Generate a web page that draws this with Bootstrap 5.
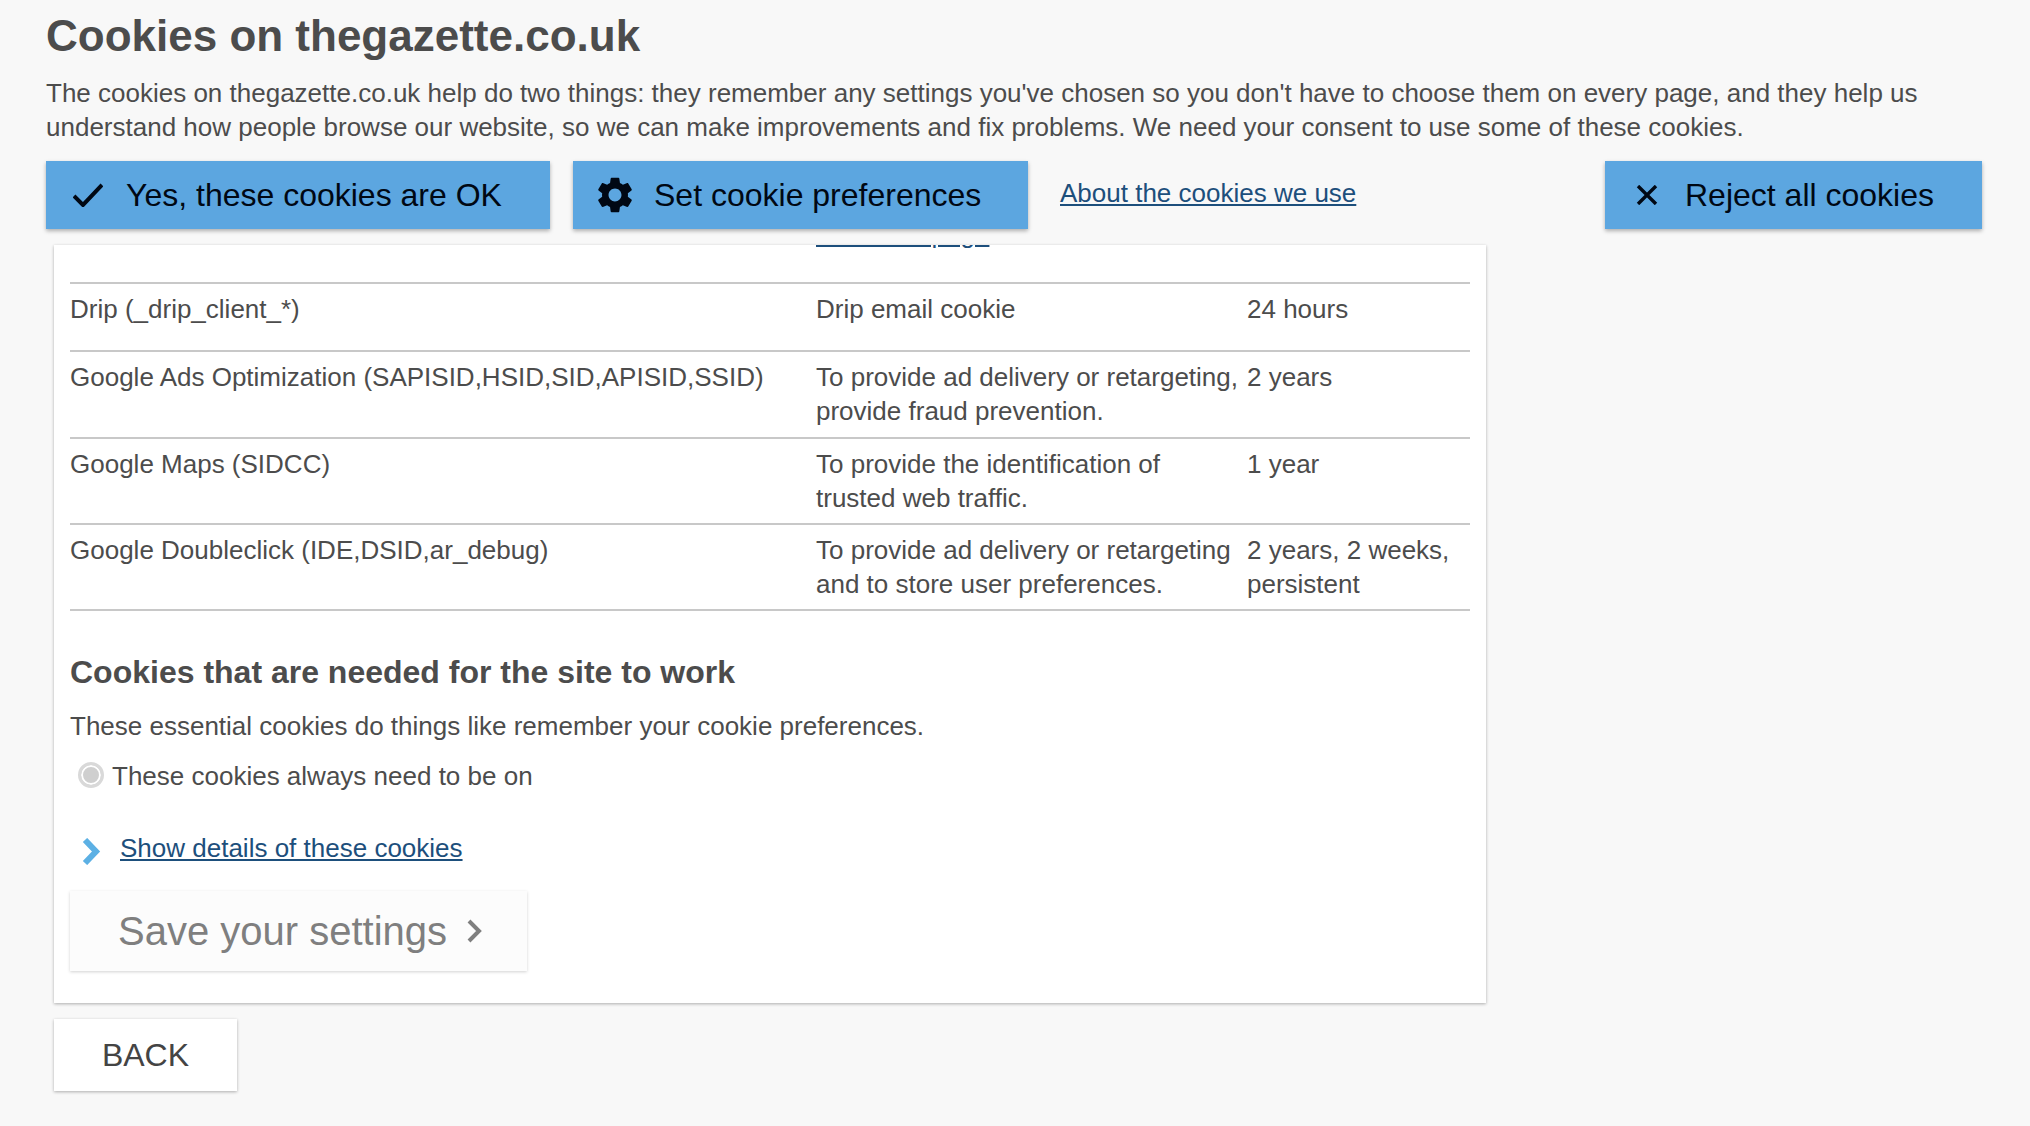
<!DOCTYPE html>
<html lang="en">
<head>
  <meta charset="UTF-8">
  <meta name="viewport" content="width=device-width, initial-scale=1.0">
  <title>Cookies on thegazette.co.uk</title>
  <link href="https://cdn.jsdelivr.net/npm/bootstrap@5.3.0/dist/css/bootstrap.min.css" rel="stylesheet">
  <script src="https://cdn.jsdelivr.net/npm/bootstrap@5.3.0/dist/js/bootstrap.bundle.min.js"></script>
  <style>
    html, body { height: 100%; }
    body {
      background: #f8f8f8;
      color: #4c4c4c;
      font-family: "Liberation Sans", Arial, sans-serif;
      font-size: 26px;
      line-height: 34px;
      overflow: hidden;
    }
    a { color: #1d4f7c; }
    .cookie-head { padding: 12px 47px 0 46px; }
    .cookie-title { font-size: 44px; line-height: 48px; font-weight: 700; margin: 0 0 16px; }
    .cookie-intro { margin: 0 0 17px; }
    .consent-btn {
      background: #5ca6e0;
      color: #000814;
      border: 0;
      border-radius: 0;
      height: 68px;
      font-size: 32px;
      line-height: 68px;
      padding: 0;
      box-shadow: 0 2px 4px rgba(0, 0, 0, .3);
    }
    .btn-yes { width: 504px; margin-right: 23px; }
    .btn-prefs { width: 455px; margin-right: 32px; }
    .btn-reject { width: 377px; margin-right: 1px; }
    .btn-yes svg { margin: 0 23px 0 27px; }
    .btn-prefs svg { margin: 0 21px 0 24px; }
    .btn-reject svg { margin: 0 27px 0 31px; }
    .about-link { margin-top: -4px; }
    .cookie-panel {
      width: 1432px;
      margin: 16px 0 0 54px;
      height: 758px;
      background: #fff;
      padding: 0 16px;
      box-shadow: 0 1px 3px rgba(0, 0, 0, .3);
    }
    .clip-row { height: 39px; border-bottom: 2px solid #c8c8c8; overflow: hidden; padding-left: 746px; }
    .clip-row a { display: block; width: max-content; margin-top: -28px; }
    .cookie-table { margin: 0; width: 1400px; table-layout: fixed; color: inherit; --bs-table-bg: transparent; --bs-table-color: #4c4c4c; }
    .cookie-table td { padding: 8px 4px 8px 0; border-bottom: 2px solid #c8c8c8; vertical-align: top; line-height: 34px; }
    .cookie-table .one-line td { padding-bottom: 24px; }
    .cookie-table .tall-line td { padding-bottom: 9px; }
    .panel-heading { font-size: 32px; line-height: 36px; font-weight: 700; margin: 43px 0 19px; }
    .panel-text { margin: 0 0 16px; }
    .always-on { margin: 0 0 38px 8px; gap: 8px; }
    .fake-radio { width: 26px; height: 26px; margin-top: -2px; border-radius: 50%; border: 3px solid #d9d9d9; background: #cfcfcf; box-shadow: inset 0 0 0 2px #fff; }
    .details-row { margin: 0 0 26px 12px; gap: 19px; height: 34px; }
    .details-row svg { margin-top: 6px; }
    .save-btn {
      width: 457px;
      height: 80px;
      background: #fcfcfc;
      color: #7f7f7f;
      font-size: 40px;
      line-height: 80px;
      padding: 0 0 0 48px;
      border: 0;
      border-radius: 0;
      box-shadow: 0 1px 3px rgba(0, 0, 0, .18);
    }
    .save-btn svg { margin-left: 20px; }
    .back-btn {
      display: block;
      margin: 16px 0 0 54px;
      width: 183px;
      height: 72px;
      background: #fff;
      color: #444;
      font-size: 32px;
      line-height: 72px;
      padding: 0;
      border: 0;
      border-radius: 0;
      box-shadow: 0 1px 3px rgba(0, 0, 0, .3);
    }
  </style>
</head>
<body>
  <div class="cookie-head">
    <h1 class="cookie-title">Cookies on thegazette.co.uk</h1>
    <p class="cookie-intro">The cookies on thegazette.co.uk help do two things: they remember any settings you've chosen so you don't have to choose them on every page, and they help us understand how people browse our website, so we can make improvements and fix problems. We need your consent to use some of these cookies.</p>
    <div class="d-flex align-items-center">
      <button class="btn consent-btn btn-yes d-flex align-items-center" type="button">
        <svg width="30" height="24" viewBox="0 0 30 24" fill="none" stroke="currentColor" stroke-width="4"><path d="M1 13l9 9L29 2"/></svg>Yes, these cookies are OK
      </button>
      <button class="btn consent-btn btn-prefs d-flex align-items-center" type="button">
        <svg width="36" height="36" viewBox="2 2 20 20" fill="currentColor"><path d="M19.14 12.94c.04-.3.06-.61.06-.94 0-.32-.02-.64-.07-.94l2.03-1.58c.18-.14.23-.41.12-.61l-1.92-3.32c-.12-.22-.37-.29-.59-.22l-2.39.96c-.5-.38-1.03-.7-1.62-.94l-.36-2.54c-.04-.24-.24-.41-.48-.41h-3.84c-.24 0-.43.17-.47.41l-.36 2.54c-.59.24-1.13.57-1.62.94l-2.39-.96c-.22-.08-.47 0-.59.22L2.74 8.87c-.12.21-.08.47.12.61l2.03 1.58c-.05.3-.09.63-.09.94s.02.64.07.94l-2.03 1.58c-.18.14-.23.41-.12.61l1.92 3.32c.12.22.37.29.59.22l2.39-.96c.5.38 1.03.7 1.62.94l.36 2.54c.05.24.24.41.48.41h3.84c.24 0 .44-.17.47-.41l.36-2.54c.59-.24 1.13-.56 1.62-.94l2.39.96c.22.08.47 0 .59-.22l1.92-3.32c.12-.22.07-.47-.12-.61l-2.01-1.58zM12 15.6c-1.98 0-3.6-1.62-3.6-3.6s1.62-3.6 3.6-3.6 3.6 1.62 3.6 3.6-1.62 3.6-3.6 3.6z"/></svg>Set cookie preferences
      </button>
      <a class="about-link" href="#">About the cookies we use</a>
      <button class="btn consent-btn btn-reject d-flex align-items-center ms-auto" type="button">
        <svg width="22" height="20" viewBox="0 0 22 20" fill="none" stroke="currentColor" stroke-width="3.4"><path d="M2 1l18 18M20 1L2 19"/></svg>Reject all cookies
      </button>
    </div>
  </div>

  <div class="cookie-panel">
    <div class="clip-row"><a href="#">Overview page</a></div>
    <table class="table cookie-table">
      <colgroup><col style="width: 746px"><col style="width: 431px"><col></colgroup>
      <tbody>
        <tr class="one-line"><td>Drip (_drip_client_*)</td><td>Drip email cookie</td><td>24 hours</td></tr>
        <tr class="tall-line"><td>Google Ads Optimization (SAPISID,HSID,SID,APISID,SSID)</td><td>To provide ad delivery or retargeting, provide fraud prevention.</td><td>2 years</td></tr>
        <tr><td>Google Maps (SIDCC)</td><td>To provide the identification of trusted web traffic.</td><td>1 year</td></tr>
        <tr><td>Google Doubleclick (IDE,DSID,ar_debug)</td><td>To provide ad delivery or retargeting and to store user preferences.</td><td>2 years, 2 weeks, persistent</td></tr>
      </tbody>
    </table>
    <h2 class="panel-heading">Cookies that are needed for the site to work</h2>
    <p class="panel-text">These essential cookies do things like remember your cookie preferences.</p>
    <div class="always-on d-flex align-items-center"><span class="fake-radio"></span><span>These cookies always need to be on</span></div>
    <div class="details-row d-flex align-items-center">
      <svg width="19" height="27" viewBox="0 0 19 27" fill="none" stroke="#5cb0e4" stroke-width="6"><path d="M3 2l11 11.5L3 25"/></svg>
      <a href="#">Show details of these cookies</a>
    </div>
    <button class="btn save-btn d-flex align-items-center" type="button">Save your settings
      <svg width="15" height="24" viewBox="0 0 15 24" fill="none" stroke="#7f7f7f" stroke-width="4"><path d="M2 2l10 10L2 22"/></svg>
    </button>
  </div>
  <button class="btn back-btn" type="button">BACK</button>
</body>
</html>
